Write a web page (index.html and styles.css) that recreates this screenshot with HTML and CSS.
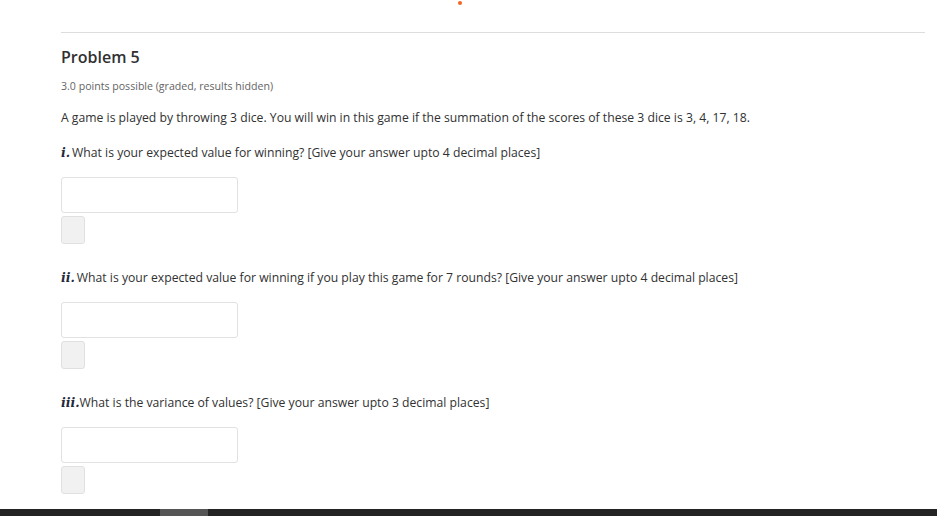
FILE: index.html
```html
<!DOCTYPE html>
<html lang="en">
<head>
  <meta charset="UTF-8" />
  <title>Problem 5</title>
  <link rel="stylesheet" href="styles.css">
</head>
<body>

<div class="top-dot"></div>

<div class="problem">
  <h3 class="problem-title">Problem 5</h3>
  <div class="points">3.0 points possible (graded, results hidden)</div>

  <p class="intro">A game is played by throwing 3 dice. You will win in this game if the summation of the scores of these 3 dice is 3, 4, 17, 18.</p>

  <div class="question">
    <p class="label"><span class="num">i.</span>What is your expected value for winning? [Give your answer upto 4 decimal places]</p>
    <input type="text" class="answer" />
    <div class="status"></div>
  </div>

  <div class="question">
    <p class="label"><span class="num">ii.</span>What is your expected value for winning if you play this game for 7 rounds? [Give your answer upto 4 decimal places]</p>
    <input type="text" class="answer" />
    <div class="status"></div>
  </div>

  <div class="question">
    <p class="label"><span class="num last">iii.</span>What is the variance of values? [Give your answer upto 3 decimal places]</p>
    <input type="text" class="answer" />
    <div class="status"></div>
  </div>
</div>

<div class="bottom-bar">
  <div class="thumb"></div>
</div>

</body>
</html>
```

FILE: styles.css
```css
body {
  margin: 0;
  font-family: 'Open Sans', 'Noto Sans', sans-serif;
  color: #313131;
  background-color: #ffffff;
  height: 516px;
  overflow: hidden;
  position: relative;
}
.top-dot {
  position: absolute;
  left: 458px;
  top: 1px;
  width: 4px;
  height: 4px;
  border-radius: 50%;
  background-color: #f26522;
}
.problem {
  margin: 32px 12px 0 61px;
  border-top: 1px solid #dddddd;
  padding-top: 13px;
}
.problem-title {
  margin: 0;
  font-size: 16px;
  font-weight: 600;
  color: #313131;
  line-height: 22px;
}
.points {
  margin-top: 11px;
  font-size: 10.6px;
  color: #646464;
  line-height: 14px;
}
.intro {
  margin: 17px 0 0;
  font-size: 12.2px;
  line-height: 16px;
}
.question {
  margin-top: 19px;
}
.label {
  margin: 0;
  font-size: 12.2px;
  line-height: 16px;
}
.num {
  font-family: 'DejaVu Serif', 'Liberation Serif', serif;
  font-style: italic;
  font-weight: bold;
  font-size: 12.5px;
  color: #1f2a3c;
  margin-right: 2px;
}
.num.last {
  margin-right: 0;
}
.answer {
  display: block;
  margin-top: 16px;
  width: 177px;
  height: 36px;
  box-sizing: border-box;
  border: 1px solid #e1e1e1;
  border-radius: 3px;
  padding: 4px 8px;
}
.status {
  margin-top: 3px;
  width: 24px;
  height: 28px;
  box-sizing: border-box;
  border: 1px solid #e0e0e0;
  border-radius: 3px;
  background-color: #f1f1f1;
}
.question + .question {
  margin-top: 26px;
}
.bottom-bar {
  position: absolute;
  left: 0;
  right: 0;
  bottom: 0;
  height: 7px;
  background-color: #242424;
}
.thumb {
  margin-left: 160px;
  width: 48px;
  height: 7px;
  background-color: #555555;
}
```
